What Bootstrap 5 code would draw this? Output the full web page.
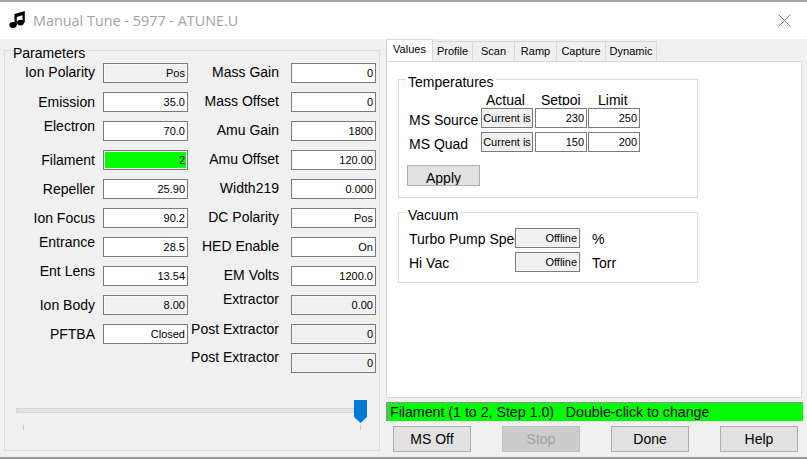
<!DOCTYPE html>
<html lang="en">
<head>
<meta charset="utf-8">
<title>Manual Tune</title>
<link href="https://cdn.jsdelivr.net/npm/bootstrap@5.3.0/dist/css/bootstrap.min.css" rel="stylesheet">
<style>
html,body{height:459px;overflow:hidden;}
body{background:#f0f0f0;font-family:"Liberation Sans",Arial,sans-serif;font-size:14px;color:#000;}
.app-win{width:807px;height:459px;overflow:hidden;border-top:2px solid #a6a6a6;border-bottom:2px solid #9a9a9a;}
.title-bar{height:37px;background:#fff;padding-left:9px;}
.app-icon{margin-top:-2px;}
.title-text{font-family:"Open Sans",sans-serif;font-size:14.4px;color:#a3a3a3;margin-left:8px;}
.close-x{margin-left:auto;margin-right:16px;}
.main-area{height:418px;}
.left-side{width:386px;padding:11px 0 0 4px;}
.group-box{border:1px solid #dcdcdc;}
.group-title{width:fit-content;background:#f0f0f0;line-height:14px;padding:0 2px;}
.params-box{width:376px;height:401px;}
.params-box .group-title{margin:-5px 0 0 6px;}
.param-cols{margin-top:3px;}
.param-grid{display:grid;row-gap:9px;grid-auto-rows:20px;}
.grid-l{grid-template-columns:90px 85px;column-gap:8px;width:183px;margin-right:3px;}
.grid-r{grid-template-columns:88px 85px;column-gap:12px;}
.lbl{line-height:20px;text-align:right;white-space:nowrap;}
.up1{margin-top:-1px;margin-bottom:1px;}
.up5{margin-top:-5px;margin-bottom:5px;}
.up6{margin-top:-6px;margin-bottom:6px;}
.fld{height:20px;border:1px solid #7a7a7a;background:#fff;font-size:11px;line-height:18px;text-align:right;padding-right:2px;white-space:nowrap;overflow:hidden;}
.fld-ro{background:#f0f0f0;box-shadow:inset 0 0 0 1px #f7f7f7;}
.fld-on{background:#0f0;box-shadow:inset 0 0 0 1px #f0f0f0;}
.slider-wrap{width:351px;margin:35px 0 0 11px;}
.slider-track{height:5px;background:#e3e5e4;border:1px solid #d6d6d6;}
.slider-thumb{position:absolute;right:-1px;top:-9px;width:13px;height:23px;}
.tick-row{padding:12px 6px 0 7px;}
.tick-mark{width:1px;height:5px;background:#c8c8c8;}
.right-side{width:421px;}
.tab-row{height:22px;margin:0;padding:2px 0 0;border:0;}
.tab-row .nav-link{height:20px;margin:0;padding:0;font-size:11px;line-height:19px;color:#000;background:#f0f0f0;border:1px solid #d9d9d9;border-bottom:0;border-left:0;border-radius:0;text-align:center;}
.tab-row .nav-link.active{height:22px;margin-top:-2px;background:#fff;border:1px solid #d9d9d9;border-bottom:0;line-height:18px;}
.tab-w47{width:47px;}
.tab-w40{width:40px;}
.tab-w42{width:42px;}
.tab-w49{width:49px;}
.tab-w51{width:51px;}
.tab-body{width:416px;height:337px;background:#fff;border:1px solid #d9d9d9;padding:17px 0 0 11px;}
.sub-box{width:300px;border:1px solid #dcdcdc;}
.sub-box .group-title{background:#fff;margin:-5px 0 0 7px;}
.temp-box{height:119px;}
.vac-box{height:71px;margin-top:14px;}
.temp-head{height:14px;margin:2px 0 0 87px;overflow:hidden;line-height:18px;white-space:nowrap;}
.head-a{width:55px;flex:none;}
.head-b{width:40px;flex:none;overflow:hidden;margin-right:17px;}
.temp-row{margin-top:3px;height:20px;}
.temp-row+.temp-row{margin-top:4px;}
.row-name{width:72px;padding-left:10px;margin-right:10px;flex:none;line-height:20px;margin-top:2px;white-space:nowrap;}
.cell-w{width:52px;flex:none;margin-right:1px;}
.cell-first{margin-right:2px;}
.cell-txt{text-align:center;padding:0;}
.apply-btn{width:73px;height:21px;margin:13px 0 0 8px;padding:0;background:#e1e1e1;border:1px solid #adadad;border-radius:0;color:#000;font-size:14px;line-height:25px;overflow:hidden;}
.vac-row{height:20px;margin-top:6px;}
.vac-row+.vac-row{margin-top:4px;}
.vac-name{width:116px;padding-left:10px;flex:none;overflow:hidden;white-space:nowrap;line-height:22px;}
.vac-fld{width:65px;flex:none;}
.vac-unit{margin-left:12px;line-height:22px;}
.status-line{width:417px;height:19px;margin-top:4px;background:#0f0;border-top:1px solid #8f8f8f;border-left:2px solid #8f8f8f;padding-left:2px;font-size:14.2px;line-height:19px;white-space:pre;overflow:hidden;}
.btn-row{width:405px;margin:5px 0 0 7px;}
.act-btn{width:78px;height:26px;padding:0;background:#e1e1e1;border:1px solid #adadad;border-radius:0;color:#000;font-size:14px;line-height:24px;}
.act-btn:disabled{background:#ccc;border-color:#bfbfbf;color:#a0a0a0;opacity:1;}
</style>
</head>
<body>
<div class="app-win">
  <div class="title-bar d-flex align-items-center">
    <svg class="app-icon" width="16" height="17" viewBox="0 0 16 17" aria-hidden="true"><path d="M5.500 3 15.800 0V11.500H13.500V4.300L7.800 6V14H5.500Z" fill="#000"/><ellipse cx="4" cy="14" rx="3.600" ry="2.900" fill="#000"/><ellipse cx="11.500" cy="11.600" rx="3.500" ry="2.800" fill="#000"/></svg>
    <span class="title-text">Manual Tune - 5977 - ATUNE.U</span>
    <svg class="close-x" width="13" height="13" viewBox="0 0 13 13" aria-hidden="true"><path d="M.5.500 12.500 12.500M12.500.500 .5 12.500" stroke="#7d7d7d" stroke-width="1" fill="none"/></svg>
  </div>
  <div class="main-area d-flex">
    <div class="left-side">
      <div class="group-box params-box">
        <div class="group-title">Parameters</div>
        <div class="param-cols d-flex">
          <div class="param-grid grid-l">
            <div class="lbl up1">Ion Polarity</div><div class="fld fld-ro">Pos</div>
            <div class="lbl">Emission</div><div class="fld">35.0</div>
            <div class="lbl up5">Electron</div><div class="fld">70.0</div>
            <div class="lbl">Filament</div><div class="fld fld-on">2</div>
            <div class="lbl">Repeller</div><div class="fld">25.90</div>
            <div class="lbl">Ion Focus</div><div class="fld">90.2</div>
            <div class="lbl up5">Entrance</div><div class="fld">28.5</div>
            <div class="lbl up5">Ent Lens</div><div class="fld">13.54</div>
            <div class="lbl">Ion Body</div><div class="fld fld-ro">8.00</div>
            <div class="lbl">PFTBA</div><div class="fld">Closed</div>
          </div>
          <div class="param-grid grid-r">
            <div class="lbl up1">Mass Gain</div><div class="fld">0</div>
            <div class="lbl up1">Mass Offset</div><div class="fld">0</div>
            <div class="lbl up1">Amu Gain</div><div class="fld">1800</div>
            <div class="lbl up1">Amu Offset</div><div class="fld">120.00</div>
            <div class="lbl up1">Width219</div><div class="fld">0.000</div>
            <div class="lbl up1">DC Polarity</div><div class="fld">Pos</div>
            <div class="lbl up1">HED Enable</div><div class="fld">On</div>
            <div class="lbl up1">EM Volts</div><div class="fld">1200.0</div>
            <div class="lbl up6">Extractor</div><div class="fld fld-ro">0.00</div>
            <div class="lbl up5">Post Extractor</div><div class="fld fld-ro">0</div>
            <div class="lbl up6">Post Extractor</div><div class="fld fld-ro">0</div>
          </div>
        </div>
        <div class="slider-wrap">
          <div class="slider-track position-relative">
            <svg class="slider-thumb" viewBox="0 0 13 23" aria-hidden="true"><path d="M0 0H13V17L6.500 23 0 17Z" fill="#0078d7"/></svg>
          </div>
          <div class="tick-row d-flex justify-content-between"><span class="tick-mark"></span><span class="tick-mark"></span></div>
        </div>
      </div>
    </div>
    <div class="right-side">
      <ul class="nav nav-tabs tab-row">
        <li class="nav-item"><a class="nav-link active tab-w47" href="#">Values</a></li>
        <li class="nav-item"><a class="nav-link tab-w40" href="#">Profile</a></li>
        <li class="nav-item"><a class="nav-link tab-w42" href="#">Scan</a></li>
        <li class="nav-item"><a class="nav-link tab-w42" href="#">Ramp</a></li>
        <li class="nav-item"><a class="nav-link tab-w49" href="#">Capture</a></li>
        <li class="nav-item"><a class="nav-link tab-w51" href="#">Dynamic</a></li>
      </ul>
      <div class="tab-body">
        <div class="sub-box temp-box">
          <div class="group-title">Temperatures</div>
          <div class="temp-head d-flex"><span class="head-a">Actual</span><span class="head-b">Setpoint</span><span>Limit</span></div>
          <div class="temp-row d-flex">
            <div class="row-name">MS Source</div>
            <div class="fld fld-ro cell-w cell-first cell-txt">Current is</div>
            <div class="fld cell-w">230</div>
            <div class="fld cell-w">250</div>
          </div>
          <div class="temp-row d-flex">
            <div class="row-name">MS Quad</div>
            <div class="fld fld-ro cell-w cell-first cell-txt">Current is</div>
            <div class="fld cell-w">150</div>
            <div class="fld cell-w">200</div>
          </div>
          <button class="btn apply-btn d-block" type="button">Apply</button>
        </div>
        <div class="sub-box vac-box">
          <div class="group-title">Vacuum</div>
          <div class="vac-row d-flex">
            <div class="vac-name">Turbo Pump Speed</div>
            <div class="fld fld-ro vac-fld">Offline</div>
            <div class="vac-unit">%</div>
          </div>
          <div class="vac-row d-flex">
            <div class="vac-name">Hi Vac</div>
            <div class="fld fld-ro vac-fld">Offline</div>
            <div class="vac-unit">Torr</div>
          </div>
        </div>
      </div>
      <div class="status-line">Filament (1 to 2, Step 1.0)   Double-click to change</div>
      <div class="btn-row d-flex justify-content-between">
        <button class="btn act-btn" type="button">MS Off</button>
        <button class="btn act-btn" type="button" disabled>Stop</button>
        <button class="btn act-btn" type="button">Done</button>
        <button class="btn act-btn" type="button">Help</button>
      </div>
    </div>
  </div>
</div>
<script src="https://cdn.jsdelivr.net/npm/bootstrap@5.3.0/dist/js/bootstrap.bundle.min.js"></script>
</body>
</html>
